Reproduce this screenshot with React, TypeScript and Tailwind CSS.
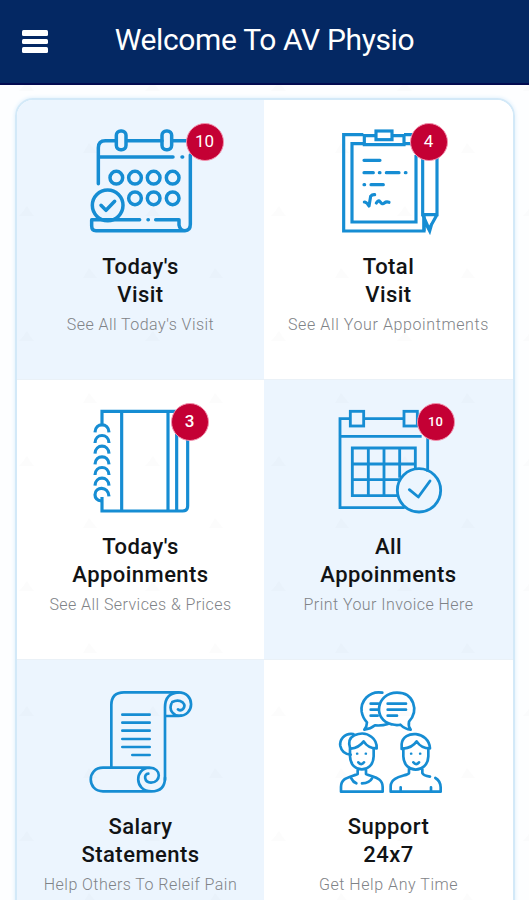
import type { ReactNode } from "react";

type Tile = {
  title: string[];
  caption: string;
  captionClass: string;
  badge?: string;
  badgeClass?: string;
  tinted: boolean;
  icon: ReactNode;
};

// Line icons are drawn on a 450x330 canvas, shown at 150x110
const Icon = ({ viewBox, width = 9.5, children }: { viewBox: string; width?: number; children: ReactNode }) => (
  <svg className="h-[110px] w-[150px]" viewBox={viewBox} fill="none" stroke="#168dd3" strokeWidth={width} strokeLinecap="round" strokeLinejoin="round">
    {children}
  </svg>
);

const TodayVisitIcon = () => (
  <Icon viewBox="-45 30 450 330" width={10.5}>
    <path d="M52 206V98Q52 77 73 77H105M137 77H243M273 77H325M328 120V328Q328 347 312 347H45Q32 347 32 332V314H176M224 314H294V330Q297 347 312 347" />
    <path d="M57 126H276M303 126H305M201 314H202" />
    <rect x="106" y="48" width="29" height="56" rx="13" />
    <rect x="243" y="48" width="29" height="56" rx="13" />
    <circle cx="106" cy="188" r="19" />
    <circle cx="162" cy="188" r="19" />
    <circle cx="218" cy="188" r="19" />
    <circle cx="275" cy="188" r="19" />
    <circle cx="162" cy="250" r="19" />
    <circle cx="218" cy="250" r="19" />
    <circle cx="275" cy="250" r="19" />
    <circle cx="80" cy="271" r="46" />
    <path d="M60 271L75 286L101 259" />
  </Icon>
);

const TotalVisitIcon = () => (
  <Icon viewBox="-48 30 450 330">
    <g strokeLinecap="butt" strokeLinejoin="miter">
      <path d="M100 59H41V348H282V302M222 59H260M100 86H66V321H258V120M222 86H260" />
      <path d="M137 62H103V89H222V62H187" />
      <rect x="138" y="48" width="48" height="26" />
      <path d="M278 120V299H321V120M278 299L297 342L321 299M282 309V348M287 325L299 348L305 327" />
    </g>
    <path d="M102 136H150M102 173H130M148 173H150M169 173H207M226 173H228M102 209H104M123 209H160" />
    <path d="M103 261Q110 261 117 273L122 244Q127 238 134 239M139 264Q145 254 150 260Q157 270 163 264Q169 259 177 262" />
  </Icon>
);

const NotebookIcon = () => (
  <Icon viewBox="-45 30 450 330">
    <g strokeLinecap="butt" strokeLinejoin="miter">
      <path d="M63 88V49H300M63 306V348H305Q320 348 320 332V100M122 49V348M261 49V348M287 100V348" />
      <path d="M42 112C43 82 83 82 84 112M42 144C43 114 83 114 84 144M42 176C43 146 83 146 84 176M42 208C43 178 83 178 84 208M42 240C43 210 83 210 84 240M42 272C43 242 83 242 84 272" />
      <path d="M84 304C82 272 42 274 42 299Q42 315 62 318" />
    </g>
  </Icon>
);

const CalendarCheckIcon = () => (
  <Icon viewBox="-33 30 450 330" width={8.5}>
    <g strokeLinecap="butt" strokeLinejoin="miter">
      <path d="M75 71H45V338H239M118 71H235M45 124H290M308 125V230" />
      <rect x="76" y="49" width="40" height="44" />
      <rect x="237" y="49" width="40" height="44" />
      <path d="M218 302H82V159H271V220M82 207H271M82 254H223M130 159V302M177 159V302M224 159V248" />
    </g>
    <circle cx="282" cy="286" r="65" />
    <path d="M253 284L280 306L315 258" />
  </Icon>
);

const ScrollIcon = () => (
  <Icon viewBox="-45 15 450 330" width={8}>
    <path d="M91 262V75Q91 37 129 37H292C343 37 343 108 292 108H256" />
    <path d="M252 300V82Q252 40 292 37M274 66Q291 57 305 67Q315 77 306 87Q299 94 291 88M271 71C263 91 278 110 300 107" />
    <path d="M205 263H66C17 263 17 334 66 334H211Q252 334 252 293M211 334C159 333 160 265 205 263C244 264 240 308 210 308C188 307 188 281 202 281" />
    <path d="M124 104H206M124 128H206M124 152H206M124 177H206M124 201H206M154 225H206" />
  </Icon>
);

const SupportIcon = () => (
  <Icon viewBox="-48 15 450 330" width={8}>
    <path d="M157 38C116 31 91 65 95 95Q98 114 111 127Q111 139 103 149Q122 147 135 136Q155 138 174 132" />
    <path d="M201 38C138 38 127 120 185 133Q200 137 211 134Q225 148 242 149Q234 139 237 125C267 92 252 38 201 38Z" />
    <path d="M173 71H228M173 89H228M173 107H201M122 71H145M122 89H145M122 107H143" />
    <path d="M60 203Q52 176 73 166Q103 153 125 171Q141 183 140 205Q114 205 101 184Q86 204 62 206M70 162C42 158 28 181 31 198Q36 222 62 224" />
    <path d="M60 206V229C61 281 130 281 131 229V207M83 267V282C60 292 33 292 33 321V335H158V321C158 292 129 292 108 282V267" />
    <path d="M64 295Q69 306 79 310M126 295Q119 309 96 310M85 247Q94 258 102 247" />
    <path d="M215 207V192C219 149 297 152 300 205Q273 205 260 184Q247 204 219 206" />
    <path d="M220 206V229C221 282 293 282 295 229V207M237 264V279C234 289 182 286 182 319V335H332V322Q331 302 316 294M277 264V279Q280 287 300 290M212 322V334M303 322V334M250 247Q258 258 267 247" />
    <path d="M81 221H82M107 221H108M243 221H244M270 221H271" strokeWidth="7" />
  </Icon>
);

const tiles: Tile[] = [
  { title: ["Today's", "Visit"], caption: "See All Today's Visit", captionClass: "tracking-[0.45px]", badge: "10", badgeClass: "left-[120px] text-[17px] font-normal", tinted: true, icon: <TodayVisitIcon /> },
  { title: ["Total", "Visit"], caption: "See All Your Appointments", captionClass: "tracking-[0.6px]", badge: "4", badgeClass: "left-[96px] text-[17px] font-normal", tinted: false, icon: <TotalVisitIcon /> },
  { title: ["Today's", "Appoinments"], caption: "See All Services & Prices", captionClass: "tracking-[0.43px]", badge: "3", badgeClass: "left-[105px] text-[17px] font-medium", tinted: false, icon: <NotebookIcon /> },
  { title: ["All", "Appoinments"], caption: "Print Your Invoice Here", captionClass: "tracking-[0.45px]", badge: "10", badgeClass: "left-[103px] text-[13px] font-medium", tinted: true, icon: <CalendarCheckIcon /> },
  { title: ["Salary", "Statements"], caption: "Help Others To Releif Pain", captionClass: "tracking-[0.45px]", tinted: true, icon: <ScrollIcon /> },
  { title: ["Support", "24x7"], caption: "Get Help Any Time", captionClass: "tracking-[0.55px]", tinted: false, icon: <SupportIcon /> },
];

const TileCard = ({ tile }: { tile: Tile }) => (
  <div className={`flex h-[280px] flex-col items-center border-b border-[#eaf1f7] pt-[25px] ${tile.tinted ? "bg-[#ecf5fe]" : "bg-white"}`}>
    <div className="relative">
      {tile.icon}
      {tile.badge && (
        <span className={`absolute -top-0.5 flex size-[38px] items-center justify-center rounded-full border border-[#f191ad] bg-[#c40034] text-white ${tile.badgeClass}`}>
          {tile.badge}
        </span>
      )}
    </div>
    <h2 className="mt-[18px] text-center text-[22px] leading-7 font-medium tracking-[0.45px] text-[#111315]">
      {tile.title[0]}
      <br />
      {tile.title[1]}
    </h2>
    <p className={`mt-1.5 text-[16px] leading-5 font-light whitespace-nowrap text-[#7f8387] ${tile.captionClass}`}>{tile.caption}</p>
  </div>
);

// Faint repeating marks behind everything
const Watermark = () => (
  <svg className="pointer-events-none absolute inset-0 size-full">
    <defs>
      <pattern id="marks" width="126" height="125" patternUnits="userSpaceOnUse">
        <path d="M83 68L89 58L97 68ZM19 6L27 -3L34 6ZM19 131L27 121L34 131Z" fill="#64748b" fillOpacity="0.025" />
      </pattern>
    </defs>
    <rect width="100%" height="100%" fill="url(#marks)" />
  </svg>
);

export default function App() {
  return (
    <div className="flex h-screen flex-col overflow-hidden bg-[#fdfeff] font-[Roboto,'Liberation_Sans',sans-serif]">
      <header className="flex h-[85px] shrink-0 items-center border-b-2 border-[#020b50] bg-[#042863] pb-1">
        <button aria-label="Menu" className="mt-1 ml-[22px] flex flex-col gap-[3px]">
          <span className="h-[5.5px] w-[26px] rounded-[1.5px] bg-white" />
          <span className="h-[5.5px] w-[26px] rounded-[1.5px] bg-white" />
          <span className="h-[5.5px] w-[26px] rounded-[1.5px] bg-white" />
        </button>
        <h1 className="mr-[48px] flex-1 text-center text-[30px] leading-9 font-normal tracking-[-0.35px] whitespace-nowrap text-white">Welcome To AV Physio</h1>
      </header>
      <main className="relative flex-1 overflow-hidden pt-[13px] pr-3.5 pl-[15px]">
        <div className="overflow-hidden rounded-t-[18px] border-2 border-[#d3e9f8] shadow-[0_0_4px_#d9edfb]">
          <div className="grid grid-cols-[247px_1fr]">
            {tiles.map((tile) => (
              <TileCard key={tile.caption} tile={tile} />
            ))}
          </div>
        </div>
        <Watermark />
      </main>
    </div>
  );
}
